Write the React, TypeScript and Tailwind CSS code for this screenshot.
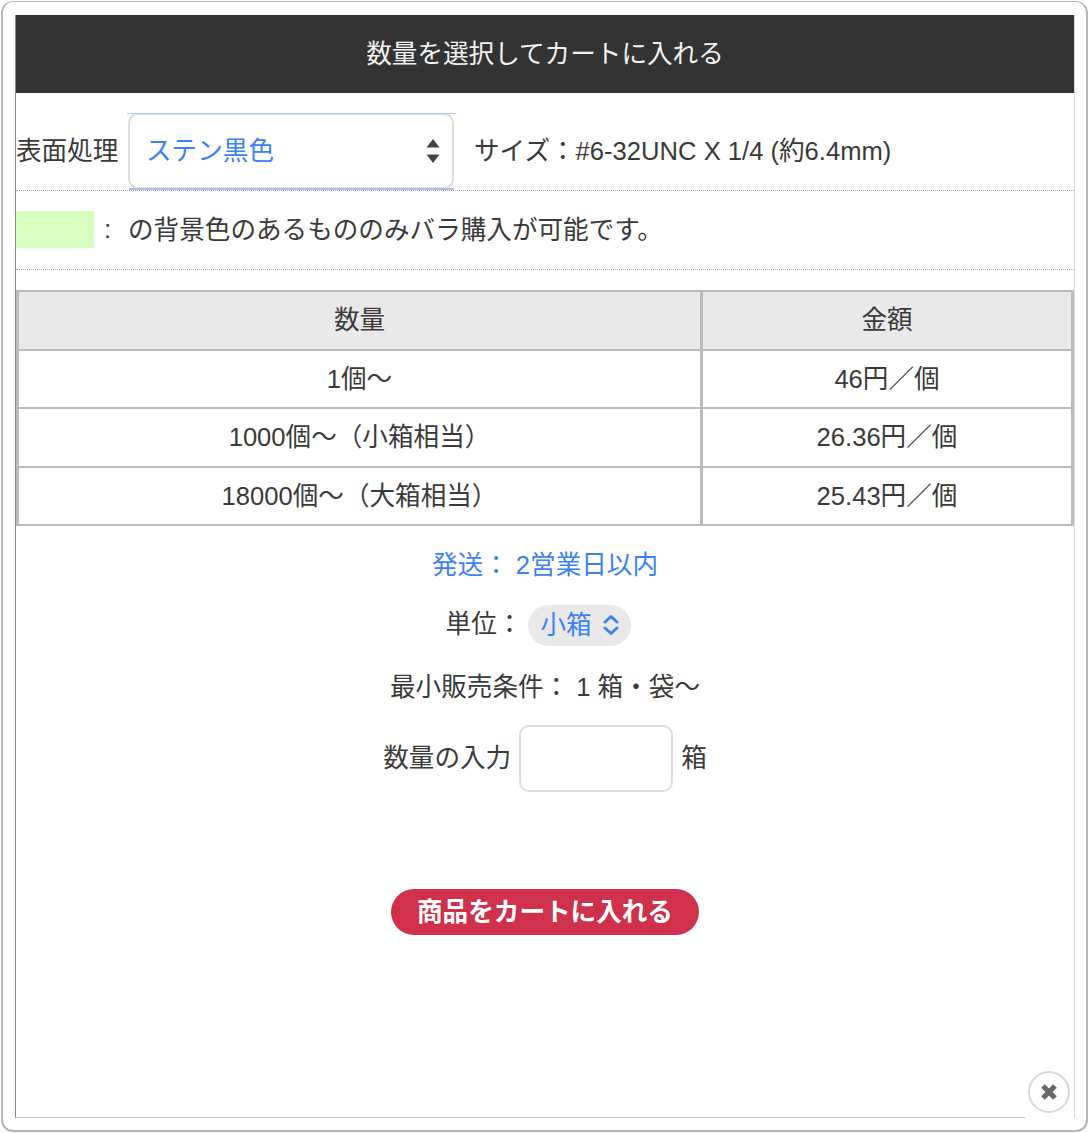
import React from 'react';

const font = { fontFamily: '"Liberation Sans", "Noto Sans CJK JP", sans-serif' };

const rows = [
  ['1個〜', '46円／個'],
  ['1000個〜（小箱相当）', '26.36円／個'],
  ['18000個〜（大箱相当）', '25.43円／個'],
];

export default function App() {
  return (
    <div style={font} className="relative h-[1133px] w-[1089px] overflow-hidden bg-white p-px text-[25.6px] leading-none text-[#3a3a3a]">
      {/* outer rounded frame */}
      <div className="h-[1131px] w-[1087px] rounded-[12px] border-2 border-t border-[#b5b5b5] pl-[12px] pr-[11px] pt-[13px]">
        <div className="flex h-[1103px] flex-col border-b border-l border-r border-b-[#c4c4c4] border-l-[#888] border-r-[#ddd]">
          {/* title bar */}
          <div className="flex h-[78px] shrink-0 items-center justify-center bg-[#333] pt-[2px] text-[#f2f2f2]">
            数量を選択してカートに入れる
          </div>

          {/* finish + size */}
          <div className="flex h-[98px] shrink-0 items-center border-b border-dotted border-[#aaa] pt-[20px]">
            <span className="w-[112px] shrink-0">表面処理</span>
            <div className="relative mb-[1px] flex h-[76px] w-[326px] shrink-0 items-center justify-between rounded-[10px] border-2 border-[#ddd] pl-[16px] pr-[11px] text-[#3b82f6]">
              <span className="pt-[2px]">ステン黒色</span>
              <svg width="16" height="26" viewBox="0 0 16 26" className="text-[#444]">
                <path d="M8 1 L14.5 9.5 H1.5 Z M8 25 L14.5 16.5 H1.5 Z" fill="currentColor" />
              </svg>
              <div className="absolute -left-[3px] -right-[4px] -top-[2px] h-px bg-[#a9cdf5]" />
              <div className="absolute -bottom-[3px] -left-[1px] -right-[2px] h-[2px] bg-[#a9c4ea]" />
            </div>
            <span className="ml-[20px]">サイズ：#6-32UNC X 1/4 (約6.4mm)</span>
          </div>

          {/* bulk note */}
          <div className="flex h-[79px] shrink-0 items-center border-b border-dotted border-[#aaa]">
            <span className="mb-[2px] h-[37px] w-[78px] shrink-0 bg-[#d6fcc0]" />
            <span className="w-[34px] shrink-0 pl-[10px]">:</span>
            <span className="pt-[1px]">の背景色のあるもののみバラ購入が可能です。</span>
          </div>

          {/* price table */}
          <table className="mt-[20px] w-full shrink-0 table-fixed border-collapse text-center">
            <thead>
              <tr className="h-[58.5px] bg-[#e9e9e9]">
                <th className="w-[684px] border-x-[3px] border-y-2 border-[#bbb] pt-[2px] font-normal">数量</th>
                <th className="border-x-[3px] border-y-2 border-[#bbb] pt-[2px] font-normal">金額</th>
              </tr>
            </thead>
            <tbody>
              {rows.map((r) => (
                <tr key={r[0]} className="h-[58.5px]">
                  <td className="border-x-[3px] border-y-2 border-[#bbb] pt-[2px]">{r[0]}</td>
                  <td className="border-x-[3px] border-y-2 border-[#bbb] pt-[2px]">{r[1]}</td>
                </tr>
              ))}
            </tbody>
          </table>

          {/* order form */}
          <div className="flex flex-col items-center">
            <p className="mt-[27px] text-[#3b82f6]">発送： 2営業日以内</p>
            <div className="mr-[13px] mt-[26px] flex items-center">
              <span className="mb-[1px]">単位：</span>
              <div className="ml-[6px] flex h-[41px] w-[103px] items-center rounded-full bg-[#e9e9e9] pl-[12px] text-[#3b82f6]">
                <span className="pt-[2px]">小箱</span>
                <svg width="18" height="24" viewBox="0 0 18 24" fill="none" stroke="currentColor" strokeWidth="3" strokeLinecap="round" strokeLinejoin="round" className="ml-[10px]">
                  <path d="M3 9 L9 3.5 L15 9 M3 15 L9 20.5 L15 15" />
                </svg>
              </div>
            </div>
            <p className="mt-[29px]">最小販売条件： 1 箱・袋〜</p>
            <div className="mt-[25px] flex items-center">
              <span>数量の入力</span>
              <input className="ml-[8px] h-[67px] w-[154px] rounded-[10px] border-2 border-[#ddd] bg-white" />
              <span className="ml-[8px]">箱</span>
            </div>
            <button className="mt-[97px] flex h-[46px] w-[308px] items-center justify-center rounded-full bg-[#cf304b] pt-[2px] font-bold text-white">
              商品をカートに入れる
            </button>
          </div>
        </div>
      </div>

      {/* close button, white square hides the frame line behind it */}
      <div className="absolute left-[1025px] top-[1067px] flex h-[52px] w-[49px] items-start justify-center bg-white pr-px pt-[4px]">
        <div className="flex h-[42px] w-[42px] items-center justify-center rounded-full border-2 border-[#d8d8d8] bg-white blur-[0.7px]">
          <svg width="20" height="20" viewBox="0 0 20 20" className="text-[#666]">
            <path d="M4 4 L16 16 M16 4 L4 16" stroke="currentColor" strokeWidth="5" />
          </svg>
        </div>
      </div>
    </div>
  );
}
